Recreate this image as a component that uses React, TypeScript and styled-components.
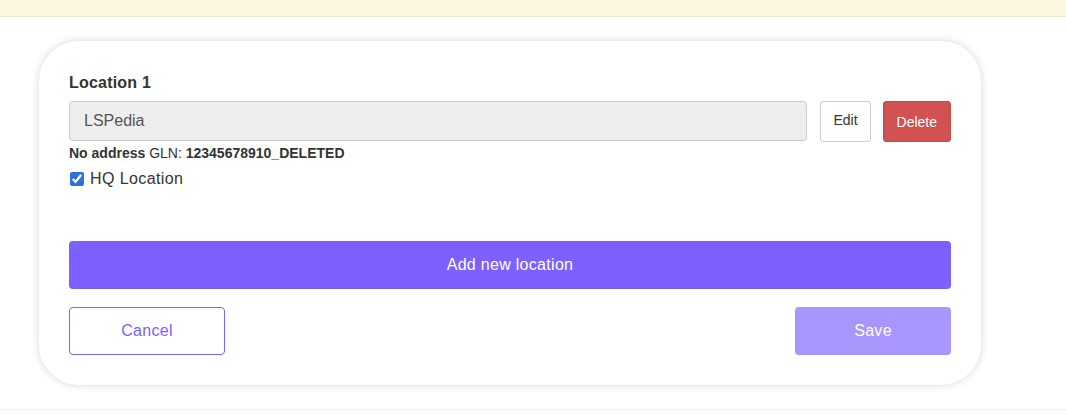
import React from 'react';
import styled, { createGlobalStyle } from 'styled-components';

const GlobalStyle = createGlobalStyle`
  body {
    margin: 0;
    background: #ffffff;
    font-family: "Liberation Sans", Arial, sans-serif;
    color: #333333;
  }
`;

const Banner = styled.div`
  height: 16px;
  background-color: #fbf7e1;
  border-bottom: 1px solid #f3ecc9;
`;

const Page = styled.div`
  padding: 24px 0 24px 39px;
  border-bottom: 1px solid #eeeeee;
`;

const Card = styled.div`
  width: 942px;
  box-sizing: border-box;
  padding: 32px 30px 30px;
  background: #ffffff;
  border-radius: 40px;
  box-shadow: 0 0 8px rgba(0, 0, 0, 0.16);
`;

const Title = styled.div`
  font-size: 16px;
  font-weight: bold;
  line-height: 20px;
  letter-spacing: 0.2px;
  color: #333333;
  margin-bottom: 8px;
`;

const InputRow = styled.div`
  display: flex;
  align-items: flex-start;
  gap: 12px;
`;

const NameInput = styled.input`
  flex: 1;
  height: 40px;
  box-sizing: border-box;
  padding: 0 14px;
  font-family: inherit;
  font-size: 16px;
  color: #555555;
  background: #eeeeee;
  border: 1px solid #cccccc;
  border-radius: 4px;
  margin-right: 1px;
`;

const SmallButton = styled.button<{ $danger?: boolean }>`
  height: 41px;
  box-sizing: border-box;
  padding: 0 ${p => (p.$danger ? '13px' : '12px')};
  font-family: inherit;
  font-size: 14px;
  color: ${p => (p.$danger ? '#ffffff' : '#333333')};
  background: ${p => (p.$danger ? '#d05252' : '#ffffff')};
  border: 1px solid ${p => (p.$danger ? '#c9494a' : '#cccccc')};
  border-radius: 3px;
  padding-bottom: ${p => (p.$danger ? '0' : '4px')};
`;

const Info = styled.div`
  margin-top: 3px;
  font-size: 14px;
  line-height: 16px;
  color: #333333;

  b {
    font-weight: bold;
  }
`;

const CheckLabel = styled.label`
  display: flex;
  align-items: center;
  gap: 6px;
  margin-top: 8px;
  font-size: 16px;
  line-height: 20px;
  letter-spacing: 0.4px;
  color: #333333;

  input {
    margin: 0 0 0 1px;
    width: 14px;
    height: 14px;
    accent-color: #2f6fe0;
  }
`;

const PrimaryButton = styled.button<{ $faded?: boolean }>`
  height: 48px;
  box-sizing: border-box;
  font-family: inherit;
  font-size: 16px;
  letter-spacing: 0.3px;
  color: #ffffff;
  background: ${p => (p.$faded ? '#a996fc' : '#7d60ff')};
  border: none;
  border-radius: 4px;
`;

const AddButton = styled(PrimaryButton)`
  display: block;
  width: 100%;
  margin-top: 52px;
`;

const Actions = styled.div`
  display: flex;
  justify-content: space-between;
  margin-top: 18px;
`;

const OutlineButton = styled.button`
  width: 156px;
  height: 48px;
  box-sizing: border-box;
  font-family: inherit;
  font-size: 16px;
  letter-spacing: 0.3px;
  color: #7d60ff;
  background: #ffffff;
  border: 1px solid #7d60ff;
  border-radius: 4px;
`;

const SaveButton = styled(PrimaryButton)`
  width: 156px;
`;

export default function App() {
  return (
    <>
      <GlobalStyle />
      <Banner />
      <Page>
        <Card>
          <Title>Location 1</Title>
          <InputRow>
            <NameInput value="LSPedia" readOnly />
            <SmallButton>Edit</SmallButton>
            <SmallButton $danger>Delete</SmallButton>
          </InputRow>
          <Info>
            <b>No address</b> GLN: <b>12345678910_DELETED</b>
          </Info>
          <CheckLabel>
            <input type="checkbox" defaultChecked />
            HQ Location
          </CheckLabel>
          <AddButton>Add new location</AddButton>
          <Actions>
            <OutlineButton>Cancel</OutlineButton>
            <SaveButton $faded>Save</SaveButton>
          </Actions>
        </Card>
      </Page>
    </>
  );
}
